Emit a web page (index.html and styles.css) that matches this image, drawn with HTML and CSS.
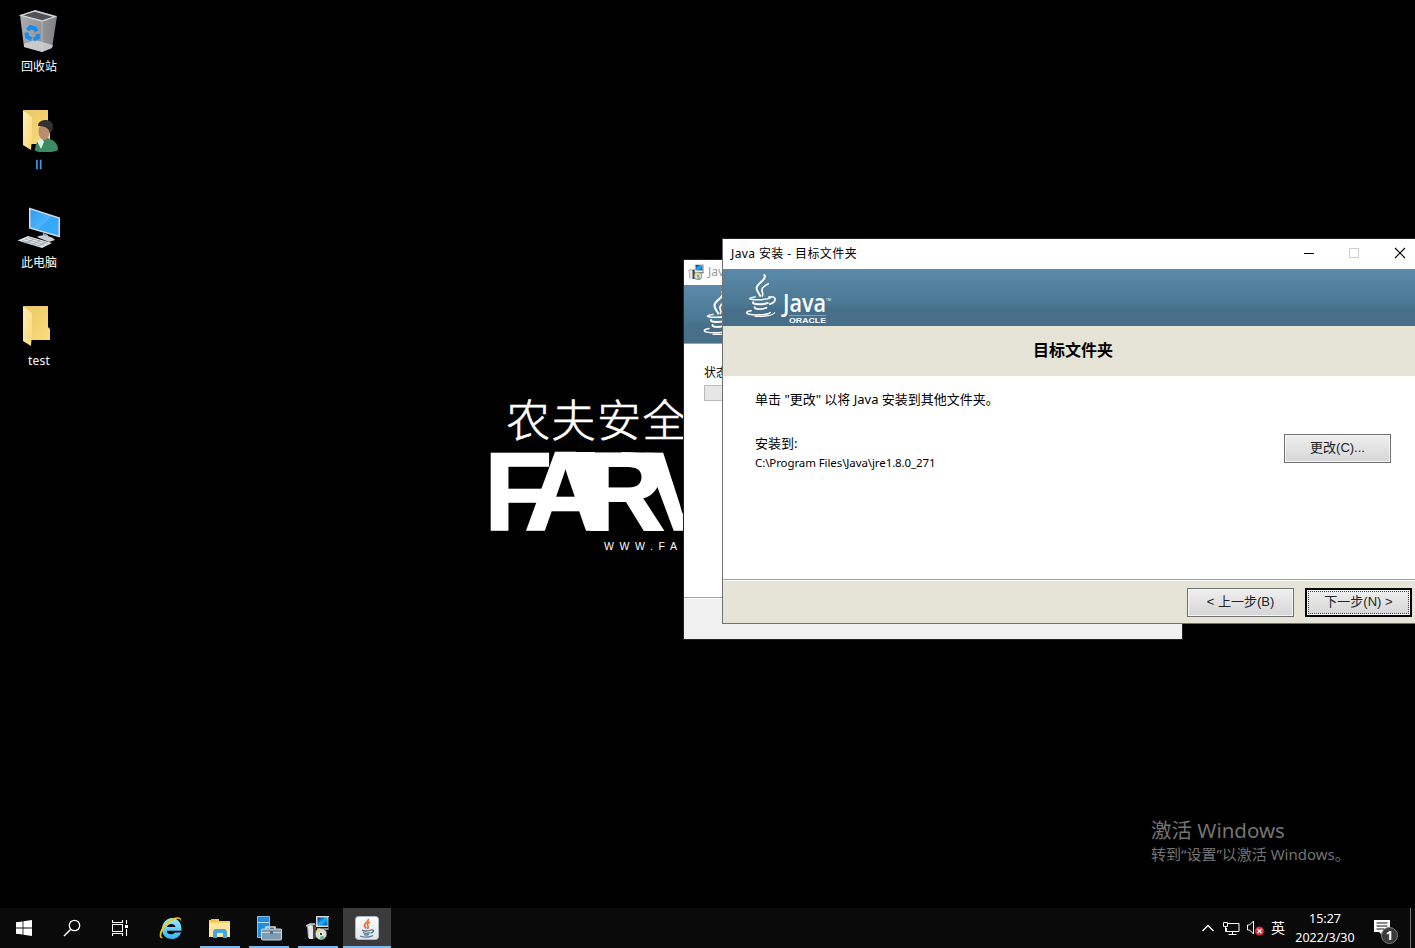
FILE: index.html
```html
<!DOCTYPE html>
<html lang="zh-CN">
<head>
<meta charset="utf-8">
<title>Desktop</title>
<link rel="stylesheet" href="styles.css">
</head>
<body>
<svg width="0" height="0" class="defs">
  <defs>
    <linearGradient id="fold" x1="0" y1="0" x2="1" y2="1"><stop offset="0" stop-color="#e9c765"/><stop offset="1" stop-color="#fbdc7e"/></linearGradient>
    <linearGradient id="flap" x1="0" y1="0" x2="1" y2="1"><stop offset="0" stop-color="#ffefb5"/><stop offset="1" stop-color="#fbd978"/></linearGradient>
    <linearGradient id="bin" x1="0" y1="0" x2="1" y2="0"><stop offset="0" stop-color="#a9abae"/><stop offset=".5" stop-color="#97999c"/><stop offset="1" stop-color="#7e8184"/></linearGradient>
    <linearGradient id="scr" x1="0" y1="0" x2="1" y2="1"><stop offset="0" stop-color="#2b9df0"/><stop offset=".5" stop-color="#4db4fb"/><stop offset=".52" stop-color="#36a7f8"/><stop offset="1" stop-color="#39adff"/></linearGradient>
    <linearGradient id="tile" x1="0" y1="0" x2="0" y2="1"><stop offset="0" stop-color="#fff"/><stop offset="1" stop-color="#dfe5ea"/></linearGradient>
    <linearGradient id="mon" x1="0" y1="0" x2="1" y2="1"><stop offset="0" stop-color="#0010a8"/><stop offset=".5" stop-color="#18b8e8"/><stop offset="1" stop-color="#0040c0"/></linearGradient>
    <linearGradient id="ieb" x1="0" y1="0" x2="0" y2="1"><stop offset="0" stop-color="#9ceafc"/><stop offset="1" stop-color="#35b5ed"/></linearGradient>
    <symbol id="folder" viewBox="0 0 28 42"><path d="M0 0h25v21l2 2v11H8V8z" fill="url(#fold)"/><path d="M0 0l9 7v20l-1 13-8-5z" fill="url(#flap)"/></symbol>
    <symbol id="cup" viewBox="0 0 32 44">
      <g fill="none" stroke="#fff" stroke-linecap="round">
        <path d="M19.500 1c3 5.500-9 8.500-8 14 .4 3 2.500 5 3.700 7.500" stroke-width="2"/>
        <path d="M23.500 10c-4 2-7.500 4-6.500 7.500.5 1.500 1.500 3 .3 5" stroke-width="1.600"/>
        <path d="M10 23.500c-4 .4-5.500 1.300-5.500 1.800 0 1.500 17 1.500 21-.8" stroke-width="1.500"/>
        <path d="M24 23.500c9-1.500 8 5.500 1 7.300" stroke-width="1.700"/>
        <path d="M8 29c-1.500 2.200 9.500 2.800 15 .6" stroke-width="2"/>
        <path d="M9.500 34c-.7 2.200 7.500 2.700 12 .5" stroke-width="1.900"/>
        <path d="M6 37.500c-5 .5-6 2.300-3 3.400 6 1.600 19 1.200 22.500-1.400" stroke-width="1.500"/>
        <path d="M10 43.300c8 .5 18-.4 20-3.600" stroke-width="1.200"/>
      </g>
    </symbol>
    <symbol id="installer" viewBox="0 0 24 24">
      <path d="M1 10l3-2h6v14H2z" fill="#999"/><path d="M2 10l3-1 2 2v12H3z" fill="#e5e5e5"/><path d="M7 9l3-1v14l-3 1z" fill="#444"/><path d="M0 10l4-2h5" fill="none" stroke="#ccc" stroke-width="1.500"/>
      <rect x="10" y="0" width="13" height="11" fill="#d8d8d0"/><rect x="11.500" y="1.500" width="10" height="8" fill="url(#mon)"/>
      <path d="M11 12h12v2H11z" fill="#888"/><path d="M22.500 1v13" stroke="#555"/>
      <circle cx="15" cy="18" r="5.800" fill="#d4ddda" stroke="#555" stroke-width=".8"/><path d="M15 18l-5-3a6 6 0 0 1 4-3z" fill="#e9d85a"/><path d="M15 18l4 4a6 6 0 0 1-5 1.700z" fill="#62bc7a"/><circle cx="15" cy="18" r="1.800" fill="#333" stroke="#fff"/>
    </symbol>
  </defs>
</svg>

<main class="desktop">
  <section class="wallpaper">
    <div class="brand-cn">农夫安全</div>
    <div class="brand-en"><span class="l-f">F</span><span class="l-a">A</span><span class="l-r">R</span><span class="l-v">V</span></div>
    <div class="brand-url">WWW.FA</div>
  </section>

  <nav class="icons">
    <div class="icon">
      <svg width="42" height="44" viewBox="0 0 42 44"><path d="M2 5L17 0 39 6 34 38 24 42 6 37z" fill="url(#bin)"/><path d="M3 5.500L17 1l20 5.500-13 4.500z" fill="#505255" stroke="#d4d5d6" stroke-width="1.300"/><path d="M24 11v31" stroke="#b3b5b8" stroke-width="1"/><path d="M6 34l11-4 18 5-1 3-10 4-18-5z" fill="#e1e2e4" opacity=".65"/><g fill="none" stroke="#178ce8" stroke-width="4"><path d="M9.500 20l3-3 4.500 1.500 1.500 3"/><path d="M8.500 22.500l.5 4.500 4.500 2"/><path d="M19.500 24l.5 3.500-4.500 2"/></g></svg>
      <span>回收站</span>
    </div>
    <div class="icon">
      <svg width="42" height="44" viewBox="0 0 42 44"><use href="#folder" x="5" y="2" width="28" height="42"/><path d="M17 43c0-8 3-11 7-12l5-1c7 2 11 5 11 12-6 3-17 3-23 1z" fill="#3c8a63"/><path d="M19 33l4 8 3-7-2-4z" fill="#dceee5"/><ellipse cx="26" cy="23.500" rx="5.500" ry="8.500" fill="#b98d6d"/><path d="M20 18c0-8 15-8 15 0 0 4-2 7-3 7-1-6-7-7-12-7z" fill="#33302e"/></svg>
      <span class="user">II</span>
    </div>
    <div class="icon">
      <svg width="44" height="44" viewBox="0 0 44 44"><path d="M12 1.500l31 10v20l-31-9z" fill="#d3dce2"/><path d="M13.500 3.500l28 9v17l-28-8z" fill="url(#scr)"/><path d="M26 27l5 2v4h-6z" fill="#9daab2"/><path d="M20 31c4-3 15-1 18 3l-6 2z" fill="#c7d0d6"/><path d="M.5 34.500L11 30l24 7-10 5z" fill="#dfe5e8"/><path d="M5 34.500l19 5.500M8 33l20 6M11 31.500l20 6M9 37l8-4M15 39l8-4.500M20 40.500l8-4" stroke="#8b989f" stroke-width=".7"/></svg>
      <span>此电脑</span>
    </div>
    <div class="icon">
      <svg width="42" height="44" viewBox="0 0 42 44"><use href="#folder" x="5" y="2" width="28" height="42"/></svg>
      <span class="en">test</span>
    </div>
  </nav>

  <section class="win back">
    <header class="bar"><svg width="16" height="16"><use href="#installer"/></svg><span>Java</span></header>
    <div class="banner"><svg width="32" height="44"><use href="#cup"/></svg></div>
    <div class="body"><p>状态:</p><div class="progress"></div></div>
    <footer class="foot"></footer>
  </section>

  <section class="win front">
    <header class="bar"><span class="cap">Java 安装 - 目标文件夹</span>
      <svg width="46" height="30" viewBox="0 0 46 30"><path d="M19 14.500h10" stroke="#000"/></svg>
      <svg width="46" height="30" viewBox="0 0 46 30"><path d="M18.500 9.500h9v9h-9z" fill="none" stroke="#ccc"/></svg>
      <svg width="46" height="30" viewBox="0 0 46 30"><path d="M18 9l10 10M28 9L18 19" stroke="#000" stroke-width="1.100"/></svg>
    </header>
    <div class="banner">
      <svg width="110" height="57" viewBox="0 0 110 57"><use href="#cup" x="22" y="5" width="32" height="43"/>
        <text x="60" y="43" class="jv" textLength="43" lengthAdjust="spacingAndGlyphs">Java</text>
        <text x="103" y="31.500" class="tm" textLength="5" lengthAdjust="spacingAndGlyphs">TM</text>
        <path d="M66 46.500h37" stroke="#9db7c8" stroke-width=".7"/>
        <text x="66" y="53.500" class="orc" textLength="37" lengthAdjust="spacingAndGlyphs">ORACLE</text>
      </svg>
    </div>
    <h1 class="title">目标文件夹</h1>
    <div class="body">
      <p class="hint">单击 "更改" 以将 Java 安装到其他文件夹。</p>
      <div class="target">
        <div><p class="label">安装到:</p><p class="path">C:\Program Files\Java\jre1.8.0_271</p></div>
        <button class="btn">更改(C)...</button>
      </div>
    </div>
    <footer class="foot"><button class="btn">&lt; 上一步(B)</button><button class="btn focus">下一步(N) &gt;</button></footer>
  </section>

  <aside class="activate"><p class="big">激活 Windows</p><p class="small">转到“设置”以激活 Windows。</p></aside>

  <footer class="taskbar">
    <div class="cell"><svg width="16" height="16" viewBox="0 0 16 16"><path d="M0 2.300l6.600-.9v6.200H0zM7.400 1.300L16 0v7.600H7.400zM0 8.400h6.600v6.200L0 13.700zM7.400 8.400H16V16l-8.600-1.300z" fill="#fff"/></svg></div>
    <div class="cell"><svg width="18" height="18" viewBox="0 0 18 18"><circle cx="11.500" cy="6.500" r="5.200" fill="none" stroke="#fff" stroke-width="1.300"/><path d="M7.800 10.200L1 17" stroke="#fff" stroke-width="1.500"/></svg></div>
    <div class="cell"><svg width="17" height="16" viewBox="0 0 17 16"><path d="M.5 0v2.500h10V0M.5 4.500h10v7H.5zM.5 16v-2.500h10V16M14.500 0v4M14.500 9v7" fill="none" stroke="#fff" stroke-width="1.100"/><path d="M13 5h3v3h-3z" fill="#fff"/></svg></div>
    <div class="cell ie"><svg width="24" height="24" viewBox="0 0 24 24"><path d="M8 11c1-4 8-4 8.500 0zM22.500 14.700V13C22.500 6 18 2 12.800 2S3 7 3 13s4 10 9.800 10c4.700 0 8-2.500 9.200-6.500h-6c-2 3-8.200 2-8.200-1.800z" fill="url(#ieb)" fill-rule="evenodd"/><path d="M4 22C-2 24 .5 12 8 6 14 .8 24-1.500 22 6c.2-5.500-7-3.500-12.500 1.500C2.500 14 .5 21 4 22z" fill="#f8c916"/></svg></div>
    <div class="cell run"><svg width="22" height="19" viewBox="0 0 22 19"><path d="M0 1h2V0h8v2h11v16H0z" fill="#f6cf60"/><path d="M0 4h21v14H0z" fill="#ffe69b"/><path d="M2 1h5" stroke="#e7a524"/><path d="M4 19v-7l2-2h10l2 2v7h-4v-5H8v5z" fill="#43a8e0"/></svg></div>
    <div class="cell run"><svg width="25" height="25" viewBox="0 0 25 25"><path d="M.5.500h12v21H.5z" fill="#218de0" stroke="#a8d5f6" stroke-width=".8"/><path d="M1 6.500h11" stroke="#b7dcf7"/><path d="M9 13V11h9v2" fill="none" stroke="#d8e1e6" stroke-width="1.500"/><rect x="4.500" y="13" width="20" height="11" rx="1" fill="#7c9cb0" stroke="#cad7df"/><path d="M5 16.500h19" stroke="#c5d3dc"/><path d="M13 15h3v3h-3z" fill="#536d7e"/></svg></div>
    <div class="cell run"><svg width="24" height="24"><use href="#installer"/></svg></div>
    <div class="cell run active"><svg width="24" height="24" viewBox="0 0 24 24"><rect x=".5" y=".5" width="23" height="23" rx="3" fill="url(#tile)" stroke="#aebbc4"/><path d="M13 3c2 3-5 4-3.500 7l2 2.500M15 6c-3 1.500-3 2.500-2 4 .5 1 .3 2-.5 3" fill="none" stroke="#e5622a" stroke-width="1.500"/><path d="M7 14c1 1.300 7 1.300 9 0M16 14c4-.8 3 2.500-.5 3M8 16.500c2 1 5 1 7 0M9 18.500c2 .8 3 .8 5 0M5 20c3 1.500 10 1.500 13-.5" fill="none" stroke="#557894" stroke-width="1.300"/></svg></div>
    <div class="tray">
      <svg width="14" height="8" viewBox="0 0 14 8"><path d="M1.500 7L7 1.500 12.500 7" fill="none" stroke="#fff" stroke-width="1.300"/></svg>
      <svg class="net" width="17" height="15" viewBox="0 0 17 15"><path d="M5 2.500h11v8H3.500V7M9.500 10.500v3M5.500 13.500h8M.5 1.500h4v4h-4zM2.500 5.500v5h1" fill="none" stroke="#fff"/></svg>
      <svg class="vol" width="18" height="16" viewBox="0 0 18 16"><path d="M.5 5h2l4-4v13l-4-4h-2z" fill="none" stroke="#fff"/><circle cx="12.500" cy="11" r="4.500" fill="#d9303b"/><path d="M10.500 9l4 4M14.500 9l-4 4" stroke="#fff" stroke-width="1.200"/></svg>
      <span class="ime">英</span>
      <div class="clock"><span>15:27</span><span>2022/3/30</span></div>
      <svg class="note" width="26" height="26" viewBox="0 0 26 26"><path d="M1 1h16v12h-7v4l-4-4H1z" fill="#fff"/><path d="M3.500 4h11M3.500 7h11M3.500 10h8" stroke="#111"/><circle cx="16.500" cy="16.500" r="8" fill="#3a3a3a" stroke="#777"/><text x="16.500" y="21" class="num">1</text></svg>
    </div>
  </footer>
</main>
</body>
</html>
```
FILE: styles.css
```css
* { box-sizing: border-box; }
body { margin: 0; background: #000; font-family: "Noto Sans", "Noto Sans CJK SC", sans-serif; font-size: 12px; }
p, h1 { margin: 0; font-weight: normal; white-space: nowrap; }
svg { display: block; flex: none; }
.defs { position: absolute; }
.desktop { position: relative; width: 1415px; height: 948px; overflow: hidden; background: #000; }

.wallpaper { position: absolute; left: 490px; top: 390px; width: 194px; height: 170px; overflow: hidden; color: #fff; white-space: nowrap; }
.brand-cn { height: 60px; padding-left: 16px; font: 300 44px/57px "Noto Sans CJK SC", sans-serif; letter-spacing: 1.500px; -webkit-text-stroke: .6px #fff; }
.brand-en { position: relative; display: flex; height: 84px; font: bold 112px/83px "Liberation Sans", sans-serif; -webkit-text-stroke: 1.500px #fff; }
.brand-en::before { content: ""; position: absolute; left: 67px; top: 2px; width: 38px; height: 52px; background: #fff; clip-path: polygon(0 0, 38px 0, 38px 52px, 16px 20px, 12px 8px, 0 8px); }
.brand-en::after { content: ""; position: absolute; left: 130px; top: 2px; width: 46px; height: 11px; background: #fff; clip-path: polygon(0 0, 42px 1px, 46px 11px, 30px 11px); }
.brand-en span { display: block; width: 0; }
.l-f { margin-left: -6px; }
.l-a { margin-left: 41px; -webkit-text-stroke-width: 2.500px; }
.l-r { margin-left: 59px; -webkit-text-stroke-width: 2px; }
.l-v { margin-left: 61px; }
.brand-url { padding-left: 114px; font: 10.500px/24px "Liberation Sans", sans-serif; letter-spacing: 5.600px; }

.icons { position: absolute; left: 0; top: 10px; width: 78px; display: flex; flex-direction: column; }
.icon { height: 98px; display: flex; flex-direction: column; align-items: center; color: #fff; }
.icon span { margin-top: 4px; line-height: 18px; }
.icon .user { color: #6fb0f5; font-family: "Open Sans", sans-serif; letter-spacing: .5px; -webkit-text-stroke: .3px #6fb0f5; }
.icon .en { letter-spacing: .2px; }

.win { position: absolute; display: flex; flex-direction: column; background: #fff; border: 1px solid #707070; }
.bar { display: flex; align-items: center; background: #fff; }
.banner { background: linear-gradient(#5b8aab, #4b7892 60%, #476f8b 70%, #476f89); overflow: hidden; flex: none; }
.body { flex: 1; }
.foot { border-top: 1px solid #a0a0a0; box-shadow: inset 0 1px #fff; flex: none; }

.back { left: 683px; top: 259px; width: 500px; height: 381px; border-color: #222; }
.back .bar { height: 25px; padding: 0 0 2px 4px; gap: 4px; color: #999; }
.back .banner { height: 59px; padding: 6px 0 0 19px; border-bottom: 1px solid #a0a0a0; }
.back .body { padding: 18px 0 0 20px; }
.back .body p { line-height: 20px; padding-top: 1px; }
.progress { width: 440px; height: 16px; margin-top: 2px; background: #e6e6e6; border: 1px solid #bcbcbc; }
.back .foot { height: 42px; background: #f0f0f0; }

.front { left: 722px; top: 238px; width: 702px; height: 386px; border-top-color: #222; }
.front .bar { height: 30px; flex: none; }
.cap { flex: 1; padding-left: 8px; line-height: 30px; letter-spacing: .4px; }
.front .banner { height: 57px; }
.jv { font: 600 25px "Open Sans", sans-serif; fill: #fff; }
.tm { font: 4px "Open Sans", sans-serif; fill: #fff; }
.orc { font: bold 7px "Liberation Sans", sans-serif; fill: #fff; }
.title { height: 50px; flex: none; background: #e6e4d6; text-align: center; font: bold 16px/46px "Noto Sans CJK SC", sans-serif; }
.front .body { padding: 13px 32px 0; }
.hint { line-height: 20px; font-size: 13px; }
.target { display: flex; justify-content: space-between; align-items: flex-start; padding-top: 25px; }
.label { line-height: 20px; font-size: 13px; margin-top: -1px; margin-bottom: 1px; }
.path { line-height: 17px; font-size: 11.500px; letter-spacing: -.1px; }
.btn { width: 107px; height: 29px; padding: 0 0 4px; border: 1px solid #707070; border-radius: 0; background: linear-gradient(#efefef, #d6d6d6); box-shadow: inset 0 0 0 1px #f5f5f5; font: 13px "Liberation Sans", "Noto Sans CJK SC", sans-serif; color: #222; }
.focus { border: 2px solid #000; outline: 1px dotted #444; outline-offset: -4px; }
.front .foot { display: flex; justify-content: flex-end; gap: 11px; height: 44px; padding: 8px 11px 0 0; background: #e6e4d6; }

.activate { position: absolute; left: 1151px; top: 817px; color: #747474; }
.big { font-size: 20.500px; line-height: 27px; }
.small { font-size: 15px; line-height: 21px; }

.taskbar { position: absolute; left: 0; right: 0; bottom: 0; height: 40px; display: flex; background: #0a0a0a; color: #fff; }
.cell { width: 48px; height: 40px; display: flex; align-items: center; justify-content: center; }
.ie { width: 54px; }
.run { width: 40px; margin-left: 2px; margin-right: 7px; border-bottom: 2px solid #76b9ed; }
.run svg { margin-top: 2px; }
.run.active { width: 48px; margin: 0 0 0 -2px; background: #3b3b3b; }
.tray { flex: 1; display: flex; justify-content: flex-end; align-items: center; padding-right: 15px; margin-right: 4px; border-right: 1px solid #777; }
.net { margin-left: 8px; }
.vol { margin-left: 7px; }
.ime { margin-left: 6px; font-size: 14px; line-height: 18px; padding-bottom: 1px; }
.clock { margin-left: 10px; width: 60px; height: 40px; display: flex; flex-direction: column; align-items: center; font-size: 12.500px; line-height: 19px; padding-top: 1px; }
.note { margin: 7px -4px 0 18px; }
.num { font: bold 13px "Noto Sans", sans-serif; fill: #fff; text-anchor: middle; }
```
